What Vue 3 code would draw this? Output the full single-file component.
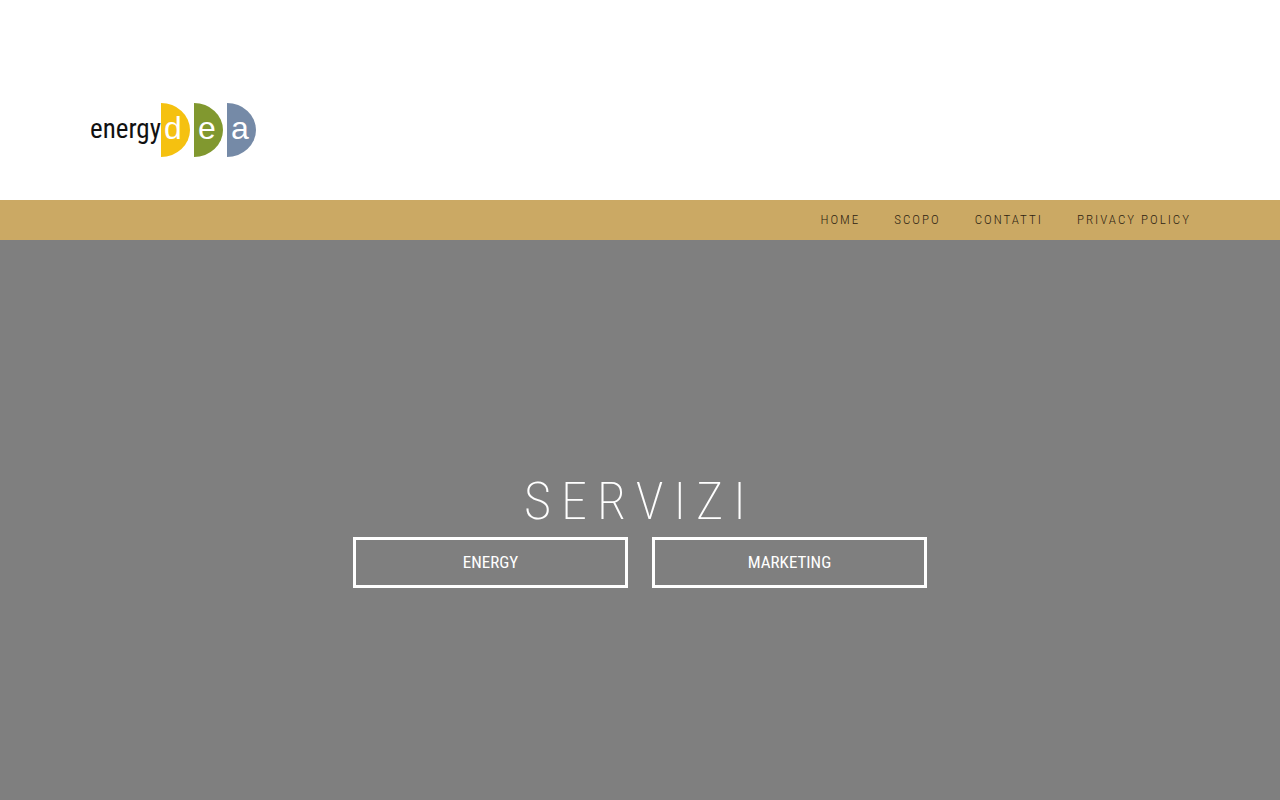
<script setup>
const links = [
  { label: 'Home', href: '#home' },
  { label: 'Scopo', href: '#scopo' },
  { label: 'Contatti', href: '#contatti' },
  { label: 'Privacy Policy', href: '#privacy' },
]
const services = [
  { label: 'Energy', href: '#energy' },
  { label: 'Marketing', href: '#marketing' },
]
</script>

<template>
  <div class="page">
    <header class="brand-bar">
      <a class="brand" href="#home" aria-label="energy dea">
        <svg width="168" height="60" viewBox="0 0 168 60">
          <path d="M71 3A29 27 0 0 1 71 57Z" fill="#f5c110" />
          <path d="M104 3A29 27 0 0 1 104 57Z" fill="#81982f" />
          <path d="M137 3A29 27 0 0 1 137 57Z" fill="#758aa7" />
          <text class="word" x="0" y="38">energy</text>
          <text class="letter" x="74" y="39">d</text>
          <text class="letter" x="108" y="39">e</text>
          <text class="letter" x="141" y="39">a</text>
        </svg>
      </a>
    </header>
    <nav class="menu">
      <a v-for="link in links" :key="link.href" :href="link.href">{{ link.label }}</a>
    </nav>
    <main class="hero">
      <h1>SERVIZI</h1>
      <div class="services">
        <a v-for="service in services" :key="service.href" :href="service.href">{{ service.label }}</a>
      </div>
    </main>
  </div>
</template>

<style>
body {
  margin: 0;
  background: #fff;
}
</style>

<style scoped>
.page {
  display: flex;
  flex-direction: column;
  min-height: 100vh;
  font-family: "Roboto Condensed", Roboto, sans-serif;
}
.brand-bar {
  padding: 100px 90px 40px;
}
.brand,
.brand svg {
  display: block;
}
.brand {
  width: 168px;
}
.word {
  font: 27px "Roboto Condensed", Roboto, sans-serif;
  fill: #111;
}
.letter {
  font: 32px "Liberation Sans", sans-serif;
  fill: #fff;
}
.menu {
  display: flex;
  justify-content: flex-end;
  gap: 34px;
  padding: 0 89px;
  background: #cba964;
}
.menu a {
  font-size: 13px;
  font-weight: 300;
  line-height: 40px;
  letter-spacing: 2px;
  text-transform: uppercase;
  text-decoration: none;
  color: #2e2412;
}
.hero {
  flex: 1;
  display: flex;
  flex-direction: column;
  align-items: center;
  padding: 227px 24px 64px;
  background: #7f7f7f;
  color: #fff;
}
h1 {
  margin: 0;
  font-size: 52px;
  font-weight: 250;
  line-height: 70px;
  letter-spacing: 10px;
}
.services {
  display: flex;
  flex-wrap: wrap;
  justify-content: center;
  gap: 24px;
}
.services a {
  box-sizing: border-box;
  width: 275px;
  border: 3px solid #fff;
  font-size: 17px;
  line-height: 45px;
  text-align: center;
  text-transform: uppercase;
  text-decoration: none;
  color: #fff;
}
</style>
